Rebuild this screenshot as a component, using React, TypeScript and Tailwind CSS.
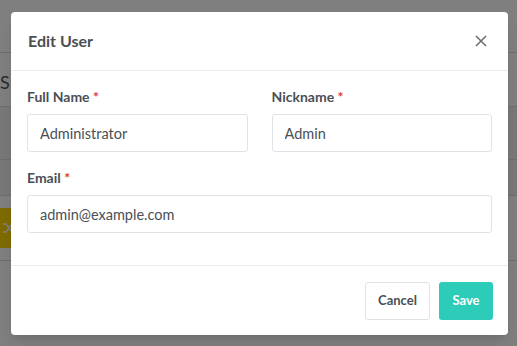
import React from "react";

function Field({ label, value }: { label: string; value: string }) {
  return (
    <div className="flex flex-col">
      <label className="text-[14px] leading-[20px] font-bold text-[#4a4f55] mb-[7px]">
        {label} <span className="text-[#e3342f]">*</span>
      </label>
      <input
        readOnly
        value={value}
        className="h-[38px] w-full rounded-[3px] border border-[#dfe3e8] bg-white px-3 text-[14.5px] text-[#495057] outline-none"
      />
    </div>
  );
}

export default function App() {
  return (
    <div
      className="relative h-[346px] w-[517px] overflow-hidden bg-white"
      style={{ fontFamily: "Lato, 'Source Sans Pro', sans-serif" }}
    >
      {/* page behind the modal */}
      <div className="flex flex-col pt-[52px]">
        <div className="h-[54px] border-t border-[#dddddd] pt-[16px] text-[18px] text-[#555]">SI</div>
        <div className="h-[53px] border-t border-[#dddddd] bg-[#f0f0f0]"></div>
        <div className="h-[36px] border-t border-[#dddddd] bg-[#f0f0f0]"></div>
        <div className="flex h-[65px] items-center border-t border-[#dddddd]">
          <div className="flex h-[40px] w-[40px] items-center bg-[#ffd500] pl-[2px]">
            <svg width="14" height="14" viewBox="0 0 14 14">
              <path d="M1 3h3l6 8h3M1 11h3l6-8h3" stroke="#ffffff" strokeWidth="1.4" fill="none" />
            </svg>
          </div>
        </div>
        <div className="h-[40px] border-t border-[#dddddd]"></div>
      </div>

      {/* overlay */}
      <div className="absolute inset-0 bg-black/50"></div>

      {/* modal */}
      <div className="absolute left-[11px] top-[12px] w-[497px] rounded-[4px] bg-white shadow-lg">
        <div className="flex h-[59px] items-center justify-between border-b border-[#e9ecef] pl-[17px] pr-[20px]">
          <h2 className="text-[16px] font-bold text-[#4a4f55]">Edit User</h2>
          <svg width="12" height="12" viewBox="0 0 12 12" className="mr-[1px]">
            <path d="M1 1L11 11M11 1L1 11" stroke="#6c6f73" strokeWidth="1.6" />
          </svg>
        </div>
        <div className="flex flex-col gap-[16px] px-[16px] pt-[16px] pb-[32px]">
          <div className="grid grid-cols-2 gap-[24px]">
            <Field label="Full Name" value="Administrator" />
            <Field label="Nickname" value="Admin" />
          </div>
          <Field label="Email" value="admin@example.com" />
        </div>
        <div className="flex h-[70px] items-center justify-end gap-[9px] border-t border-[#e9ecef] px-[15px]">
          <button className="h-[38px] w-[65px] rounded-[3px] border border-[#dfe3e8] bg-white text-[13px] font-bold text-[#4a4f55]">
            Cancel
          </button>
          <button className="h-[38px] w-[54px] rounded-[3px] bg-[#2dccb9] text-[13px] font-bold text-white">
            Save
          </button>
        </div>
      </div>
    </div>
  );
}
